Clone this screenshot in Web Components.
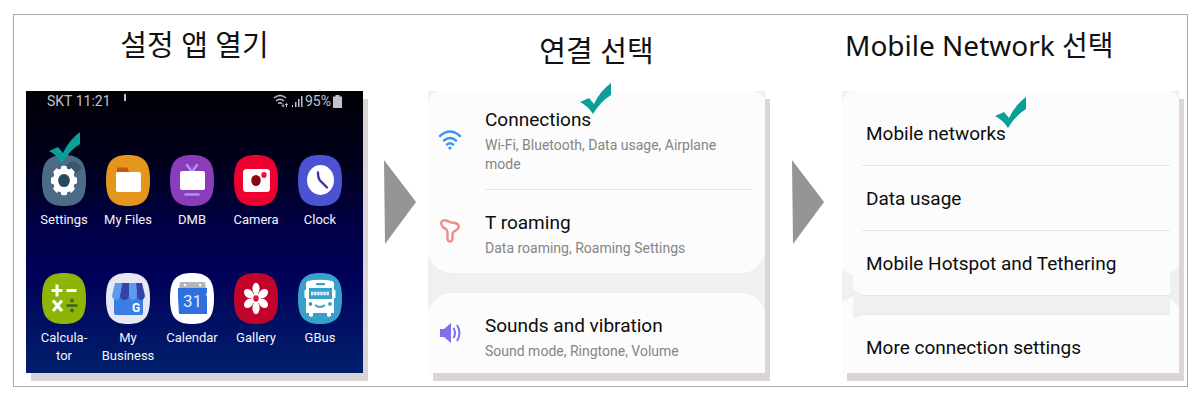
<!DOCTYPE html>
<html lang="ko">
<head>
<meta charset="utf-8">
<title>Mobile Network 선택</title>
<style>
  body {
    margin: 0;
    padding: 14px 12px 13px 13px;
    background: #fff;
    font-family: Roboto, "Noto Sans CJK KR", sans-serif;
  }
</style>
</head>
<body>
<guide-board>
  <guide-step heading="설정 앱 열기">
    <phone-home>
      <app-icon name="settings" label="Settings" checked></app-icon>
      <app-icon name="files" label="My Files"></app-icon>
      <app-icon name="dmb" label="DMB"></app-icon>
      <app-icon name="camera" label="Camera"></app-icon>
      <app-icon name="clock" label="Clock"></app-icon>
      <app-icon name="calculator" label="Calcula- tor"></app-icon>
      <app-icon name="business" label="My Business"></app-icon>
      <app-icon name="calendar" label="Calendar"></app-icon>
      <app-icon name="gallery" label="Gallery"></app-icon>
      <app-icon name="gbus" label="GBus"></app-icon>
    </phone-home>
  </guide-step>
  <step-arrow></step-arrow>
  <guide-step heading="연결 선택" class="low">
    <settings-card>
      <settings-row icon="wifi" checked>Connections<span slot="detail">Wi-Fi, Bluetooth, Data usage, Airplane mode</span></settings-row>
      <settings-row icon="roaming">T roaming<span slot="detail">Data roaming, Roaming Settings</span></settings-row>
    </settings-card>
    <card-gap></card-gap>
    <settings-card class="last">
      <settings-row icon="sound">Sounds and vibration<span slot="detail">Sound mode, Ringtone, Volume</span></settings-row>
    </settings-card>
  </guide-step>
  <step-arrow></step-arrow>
  <guide-step heading="Mobile Network 선택" class="long">
    <settings-card class="flat">
      <settings-row checked>Mobile networks</settings-row>
      <settings-row>Data usage</settings-row>
      <settings-row>Mobile Hotspot and Tethering</settings-row>
    </settings-card>
    <card-gap notched></card-gap>
    <settings-card class="last flat">
      <settings-row>More connection settings</settings-row>
    </settings-card>
  </guide-step>
</guide-board>

<script>
const makeTemplate = (html) => {
  const template = document.createElement('template');
  template.innerHTML = html;
  return template;
};

class BaseElement extends HTMLElement {
  constructor() {
    super();
    this.attachShadow({ mode: 'open' });
    this.shadowRoot.appendChild(this.constructor.template.content.cloneNode(true));
  }
}

class GuideBoard extends BaseElement {
  static template = makeTemplate(`
    <style>
      :host {
        display: grid;
        grid-template-columns: 1fr 65px 1fr 77px 1fr;
        padding: 0 8px 13px 12px;
        border: 1px solid #a9a9a9;
      }
    </style>
    <slot></slot>
  `);
}

class GuideStep extends BaseElement {
  static template = makeTemplate(`
    <style>
      :host { display: flex; flex-direction: column; min-width: 0; }
      h2 {
        display: flex;
        align-items: center;
        justify-content: center;
        box-sizing: border-box;
        height: 76px;
        margin: 0;
        padding-bottom: 16px;
        font: 400 29px/40px "Noto Sans", "Noto Sans CJK KR", sans-serif;
        color: #111;
        white-space: nowrap;
      }
      :host(.low) h2 { padding-bottom: 4px; }
      :host(.long) h2 { justify-content: flex-start; padding-left: 3px; font-size: 28px; }
      .screen {
        flex: 1;
        display: flex;
        flex-direction: column;
        background: #f0f0f0;
        box-shadow: 5px 8px 0 #ddd5d5;
      }
    </style>
    <h2></h2>
    <div class="screen"><slot></slot></div>
  `);

  connectedCallback() {
    this.shadowRoot.querySelector('h2').textContent = this.getAttribute('heading');
  }
}

class StepArrow extends BaseElement {
  static template = makeTemplate(`
    <style>
      :host { display: flex; align-items: center; justify-content: center; padding: 16px 0 0 8px; }
      svg { width: 32px; height: 84px; }
    </style>
    <svg viewBox="0 0 32 84" aria-hidden="true"><path d="M0 0 32 42 1 84z" fill="#959595"/></svg>
  `);
}

class CheckMark extends BaseElement {
  static template = makeTemplate(`
    <style>
      :host { display: block; width: 31px; height: 31px; }
      svg { display: block; }
    </style>
    <svg width="31" height="31" viewBox="0 0 31 31" aria-hidden="true">
      <path d="M0 19 9 15 14 21Q20 8 31 0V12Q20 19 13 31 8 23 0 19z" fill="#09a09a"/>
    </svg>
  `);
}

class PhoneHome extends BaseElement {
  static template = makeTemplate(`
    <style>
      :host {
        flex: 1;
        display: block;
        background: linear-gradient(#000004 0, #00001c 25%, #000048 50%, #000058 65%, #00206c 100%);
        color: #fff;
      }
      .status {
        display: flex;
        align-items: center;
        gap: 2px;
        height: 20px;
        padding: 0 21px;
        font-size: 14px;
        color: #c3c1d0;
      }
      .notice { width: 2px; height: 7px; margin: 0 auto 7px 11px; background: #c3c1d0; }
      .apps {
        display: grid;
        grid-template-columns: repeat(5, 1fr);
        row-gap: 44px;
        padding: 44px 11px 7px 6px;
      }
    </style>
    <div class="status">
      <span>SKT 11:21</span><i class="notice"></i>
      <svg width="16" height="14" viewBox="0 0 16 14" fill="none" stroke="#c3c1d0" stroke-width="1.4" aria-hidden="true">
        <path d="M1 4Q7-1 13 4M3 7Q7 3.500 11 7M5 9.500Q7 8 9 9.500"/>
        <path d="M10 9.500v3M8.700 11.300 10 12.800l1.300-1.500M13.500 13V9.500M12.200 11 13.500 9.500l1.300 1.500" stroke-width="1"/>
      </svg>
      <svg width="12" height="13" viewBox="0 0 12 13" fill="#c3c1d0" aria-hidden="true">
        <path d="M1 10h1v2H1zM4 7h1.500v5H4zM7 4h1.500v8H7zM10 1h1.500v11H10z"/>
      </svg>
      <span>95%</span>
      <svg width="9" height="13" viewBox="0 0 9 13" fill="#c3c1d0" aria-hidden="true"><path d="M2.500 0h4v1.500H9V13H0V1.500h2.500z"/></svg>
    </div>
    <div class="apps"><slot></slot></div>
  `);
}

const appArt = {
  settings: ['#4c6c86', `
    <path d="M17 14 31 6Q37 8 40 13L26 25z" fill="#3c5569"/>
    <g transform="translate(22 25.500) scale(1 1.130)" fill="#fff">
      <circle r="11"/>
      <rect x="-3" y="-13" width="6" height="26" rx="1.500"/>
      <rect x="-3" y="-13" width="6" height="26" rx="1.500" transform="rotate(45)"/>
      <rect x="-3" y="-13" width="6" height="26" rx="1.500" transform="rotate(90)"/>
      <rect x="-3" y="-13" width="6" height="26" rx="1.500" transform="rotate(135)"/>
      <circle r="5.800" fill="#27495b"/>
    </g>`],
  files: ['#e4951c', `
    <path d="M11 20V14q0-1.500 1.500-1.500H20q2 0 3 5v3z" fill="#c4570e"/>
    <path d="M11.500 17H33q2 0 2 2v16q0 2-2 2H12q-2 0-2-2V18.500q0-1.500 1.500-1.500z" fill="#fff"/>`],
  dmb: ['#8b3cb8', `
    <path d="m17 10 5 7 5-7M15.500 39.500h13" stroke="#a896f5" stroke-width="2.500" fill="none" stroke-linecap="round"/>
    <rect x="10" y="16" width="25" height="19" rx="2" fill="#fff"/>`],
  camera: ['#ee0030', `
    <rect x="9" y="14" width="27" height="23" rx="3.500" fill="#fff"/>
    <ellipse cx="22" cy="25.500" rx="4.700" ry="5.500" fill="#8c0716"/>
    <ellipse cx="30" cy="20" rx="2.700" ry="3" fill="#ee1238"/>`],
  clock: ['#4c53d3', `
    <ellipse cx="22.500" cy="25" rx="13.500" ry="15" fill="#fff"/>
    <path d="M20 17.500Q20 23 22 25.500L29 32.500" stroke="#3539a0" stroke-width="2.400" fill="none" stroke-linecap="round"/>`],
  calculator: ['#8eb506', `
    <path d="M15 11.500v12M9.500 17.500h11M24.500 17.500h10M11 27.500l9 10.500M20 27.500 11 38" stroke="#fff" stroke-width="3" fill="none"/>
    <path d="M24.500 32.500h11" stroke="#3f6720" stroke-width="2.600"/>
    <circle cx="30" cy="27.500" r="1.900" fill="#3f6720"/><circle cx="30" cy="37.500" r="1.900" fill="#3f6720"/>`],
  business: ['#e6e7f1', `
    <path d="M8 20h29v20q0 2-2 2H10q-2 0-2-2z" fill="#3b7de2"/>
    <path d="M9 10h7l-2 13q-1 4-4 4t-4-4z" fill="#5b9cf2"/>
    <path d="M16 10h7v13q-1 4-4.500 4T14 23z" fill="#3642a8"/>
    <path d="M23 10h7l1 13q-1 4-4 4t-4-4z" fill="#5b9cf2"/>
    <path d="M30 10h6l3 13q-1 4-4 4t-4-4z" fill="#3642a8"/>
    <text x="30" y="39" font-size="12" font-weight="700" text-anchor="middle" fill="#fff">G</text>`],
  calendar: ['#fff', `
    <path d="M10 9h25l1 6H9z" fill="#b3b5b8"/>
    <circle cx="15" cy="12" r="1.200" fill="#fff"/><circle cx="30" cy="12" r="1.200" fill="#fff"/>
    <path d="M8 15h29v5l-1 1 1 3v17H9l-1-16z" fill="#2f6fe0"/>
    <text x="22.500" y="34" font-size="17" text-anchor="middle" fill="#e4edff">31</text>`],
  gallery: ['#c2042c', `
    <g transform="translate(22 25.500) scale(1 1.160)" fill="#fff">
      <ellipse cy="-8.500" rx="3.600" ry="5"/>
      <ellipse cy="-8.500" rx="3.600" ry="5" transform="rotate(60)"/>
      <ellipse cy="-8.500" rx="3.600" ry="5" transform="rotate(120)"/>
      <ellipse cy="-8.500" rx="3.600" ry="5" transform="rotate(180)"/>
      <ellipse cy="-8.500" rx="3.600" ry="5" transform="rotate(240)"/>
      <ellipse cy="-8.500" rx="3.600" ry="5" transform="rotate(300)"/>
      <circle r="5"/>
      <circle r="2.700" fill="#e80e3a"/>
    </g>`],
  gbus: ['#38a1c9', `
    <path d="M10 8Q22 5.500 34 8q2 .5 2 3v6h1.500v8H36v15h-3v3q-2 1.500-4 0v-3H15v3q-2 1.500-4 0v-3H8V25H6.500v-8H8v-6q0-2.500 2-3z" fill="#fff"/>
    <rect x="18" y="10" width="9" height="2.200" rx="1" fill="#38a1c9"/>
    <rect x="11" y="15" width="23" height="11" fill="#38a1c9"/>
    <path d="M13 20.500h18" stroke="#e6f7fc" stroke-width="3.500" stroke-dasharray="2.400 .7"/>
    <circle cx="12.500" cy="31" r="1.900" fill="#38a1c9"/><circle cx="32" cy="31" r="1.900" fill="#38a1c9"/>
    <path d="M17 32q5 4 10 0" stroke="#38a1c9" stroke-width="1.700" fill="none"/>`],
};

class AppIcon extends BaseElement {
  static template = makeTemplate(`
    <style>
      :host { display: block; min-width: 0; }
      button {
        position: relative;
        display: flex;
        flex-direction: column;
        align-items: center;
        gap: 5px;
        width: 100%;
        padding: 0;
        border: 0;
        background: none;
        font: 13px/18px Roboto, sans-serif;
        color: #f4f4fa;
      }
      .label { max-width: 56px; min-height: 18px; }
      check-mark { position: absolute; top: -23px; left: 50%; margin-left: -15px; }
    </style>
    <button type="button">
      <svg width="44" height="51" viewBox="0 0 44 51" aria-hidden="true"></svg>
      <span class="label"></span>
    </button>
  `);

  connectedCallback() {
    const [fill, art] = appArt[this.getAttribute('name')];
    const shape = `<path d="M22 0C39 0 44 8 44 25.500S39 51 22 51 0 43 0 25.500 5 0 22 0z" fill="${fill}"/>`;
    this.shadowRoot.querySelector('svg').innerHTML = shape + art;
    this.shadowRoot.querySelector('.label').textContent = this.getAttribute('label');
    if (this.hasAttribute('checked')) {
      this.shadowRoot.querySelector('button').append(document.createElement('check-mark'));
    }
  }
}

class SettingsCard extends BaseElement {
  static template = makeTemplate(`
    <style>
      :host { display: block; background: #fcfcfc; border-radius: 12px 12px 24px 24px; }
      :host(.last) { flex: 1; border-radius: 24px 24px 0 0; }
      :host(.flat) { border-radius: 12px 12px 0 0; }
      :host(.last.flat) { border-radius: 0; }
    </style>
    <slot></slot>
  `);
}

class CardGap extends BaseElement {
  static template = makeTemplate(`
    <style>
      :host { position: relative; display: block; height: 20px; }
      :host([notched]) { background: #fcfcfc; }
      svg { display: none; }
      :host([notched]) svg { position: absolute; top: -30px; left: 0; display: block; width: 100%; height: 56px; pointer-events: none; }
    </style>
    <svg viewBox="0 0 337 56" preserveAspectRatio="none" aria-hidden="true">
      <path d="M0 5 11 10V24L20 30H328V8L337 1V42L328 33V50H20L11 54V31L0 37z" fill="#f0f0f0"/>
      <path d="M20 30.500H328M20 49.500H328" stroke="#e4e4e4"/>
    </svg>
  `);
}

const rowIcons = {
  wifi: `<g fill="none" stroke="#3c92f4" stroke-width="2.400" stroke-linecap="round"><path d="M2 8Q12-1 22 8M6 12.500Q12 7.500 18 12.500M9 16.500Q12 14 15 16.500"/></g><circle cx="12" cy="20" r="1.600" fill="#3c92f4"/>`,
  roaming: `<path d="M5 1.500Q2 3 4 6.500 5 9 8 10 9.500 11 9.500 14V20Q10 23 12.500 22.500 14.500 22 14.500 19V15Q15 12.500 18.500 11 22 8.500 20 5.500 18 3.500 13 3.500 7 .5 5 1.500z" fill="none" stroke="#ef8d8d" stroke-width="2.400"/>`,
  sound: `<path d="M2 8H6L13 2V22L6 16H2z" fill="#7b72ea"/><path d="M15.500 7Q18.500 12 15.500 17M19 4Q24 12 19 20" fill="none" stroke="#7b72ea" stroke-width="2"/>`,
};

class SettingsRow extends BaseElement {
  static template = makeTemplate(`
    <style>
      :host { display: block; padding: 0 9px 0 20px; }
      :host([icon]) { padding: 0 12px 0 10px; }
      button {
        display: flex;
        align-items: center;
        gap: 23px;
        width: 100%;
        padding: 0;
        border: 0;
        background: none;
        font: 19px/26px Roboto, sans-serif;
        color: #0c0c0c;
        text-align: left;
      }
      svg { display: none; flex: none; }
      :host([icon]) svg { display: block; }
      .text {
        flex: 1;
        padding: 20px 4px 18px;
      }
      :host([icon]) .text { padding: 20px 30px 15px 0; }
      :host(:first-child) .text { padding-top: 30px; }
      :host([icon]:first-child) .text { padding-top: 16px; }
      :host(:only-child) .text,
      :host([icon]:only-child) .text { padding-top: 20px; padding-bottom: 12px; }
      .title { position: relative; }
      .detail { display: block; margin-top: 3px; font-size: 14px; line-height: 19px; color: #858585; }
      :host(:not([icon])) .detail { display: none; }
      /* hairline between two rows of one card */
      :host(:not(:first-child)) .text { border-top: 1px solid #e6e6e6; }
      check-mark { position: absolute; left: 100%; bottom: 17px; margin-left: -11px; }
    </style>
    <button type="button">
      <svg width="24" height="24" viewBox="0 0 24 24" aria-hidden="true"></svg>
      <span class="text">
        <span class="title"><slot></slot></span>
        <span class="detail"><slot name="detail"></slot></span>
      </span>
    </button>
  `);

  connectedCallback() {
    this.shadowRoot.querySelector('svg').innerHTML = rowIcons[this.getAttribute('icon')] || '';
    if (this.hasAttribute('checked')) {
      this.shadowRoot.querySelector('.title').append(document.createElement('check-mark'));
    }
  }
}

customElements.define('guide-board', GuideBoard);
customElements.define('guide-step', GuideStep);
customElements.define('step-arrow', StepArrow);
customElements.define('check-mark', CheckMark);
customElements.define('phone-home', PhoneHome);
customElements.define('app-icon', AppIcon);
customElements.define('settings-card', SettingsCard);
customElements.define('card-gap', CardGap);
customElements.define('settings-row', SettingsRow);
</script>
</body>
</html>
